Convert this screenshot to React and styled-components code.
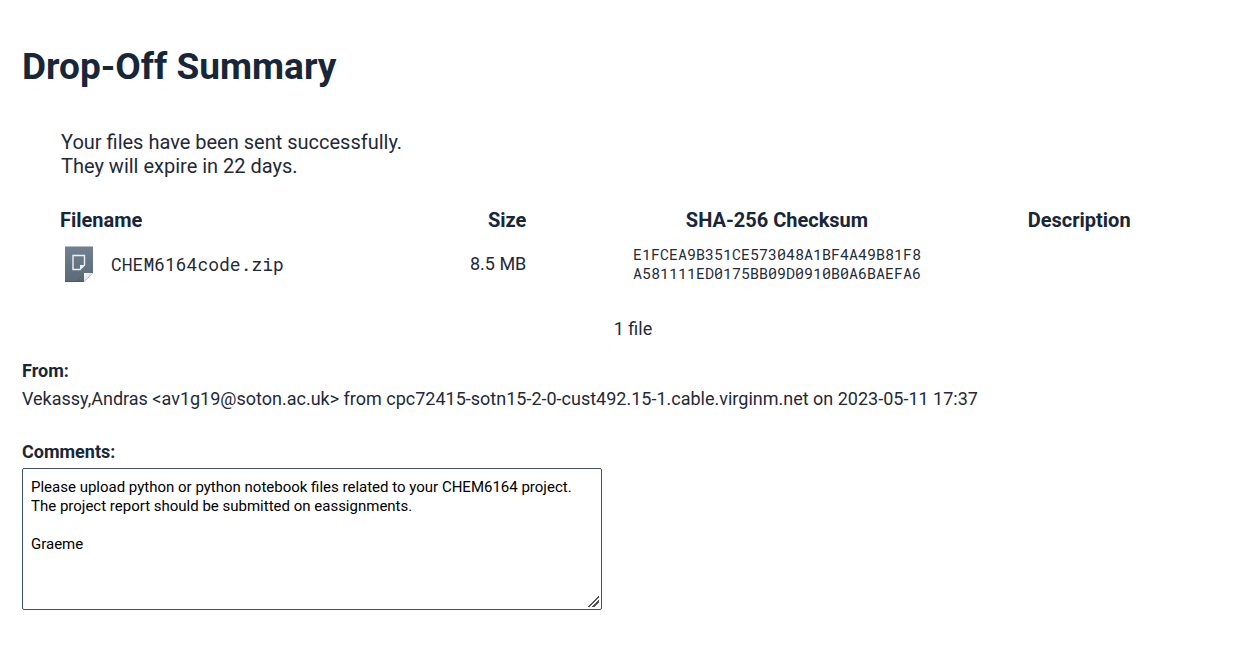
import React from "react";
import styled, { createGlobalStyle } from "styled-components";

const GlobalStyle = createGlobalStyle`
  * { box-sizing: border-box; }
  body {
    margin: 0;
    background: #fff;
    color: #1f2937;
    font-family: Roboto, "Liberation Sans", sans-serif;
    font-size: 18px;
    line-height: 24px;
  }
`;

const Page = styled.main`
  padding: 43px 22px 32px;
`;

const Title = styled.h1`
  margin: 0 0 39px;
  font-size: 37px;
  line-height: 48px;
  font-weight: 700;
  color: #172638;
`;

const Summary = styled.section`
  margin: 0 5px 0 35px;
`;

const Status = styled.p`
  margin: 0 0 28px 4px;
  font-size: 20px;
`;

const FileTable = styled.table`
  width: 100%;
  table-layout: fixed;
  border-collapse: collapse;
`;

const HeadCell = styled.th`
  width: ${(p) => p.$width};
  padding: 2px 3px;
  text-align: ${(p) => p.$align || "left"};
  font-size: 20px;
  font-weight: 700;
  color: #172638;
`;

const Cell = styled.td`
  height: 60px;
  padding: 2px 3px;
  text-align: ${(p) => p.$align || "left"};
  vertical-align: middle;
`;

const FileName = styled.div`
  display: flex;
  align-items: center;
  gap: 16px;
  padding-left: 3px;
  font-family: "Roboto Mono", "Liberation Mono", monospace;
`;

const Checksum = styled.div`
  font-family: "Roboto Mono", "Liberation Mono", monospace;
  font-size: 15px;
  line-height: 19px;
`;

const FileCount = styled.p`
  margin: 23px 0 18px;
  text-align: center;
`;

const Label = styled.label`
  display: block;
  font-weight: 700;
  color: #172638;
`;

const Heading = styled.h2`
  margin: 0 0 4px;
  font-size: 18px;
  line-height: 24px;
  font-weight: 700;
  color: #172638;
`;

const Sender = styled.p`
  margin: 0 0 29px;
`;

const Comments = styled.textarea`
  display: block;
  width: 580px;
  max-width: 100%;
  height: 142px;
  margin-top: 4px;
  padding: 9px 8px;
  border: 1px solid #40516b;
  border-radius: 2px;
  background: #fff;
  color: #000;
  font: 15px/19px Roboto, "Liberation Sans", sans-serif;
  resize: both;
  overflow: auto;

  &::-webkit-resizer {
    background: linear-gradient(
      135deg,
      transparent 0 46%,
      #555 46% 56%,
      transparent 56% 68%,
      #555 68% 78%,
      transparent 78%
    ) center / 11px 11px no-repeat;
  }
`;

function FileIcon() {
  return (
    <svg width="32" height="38" viewBox="0 0 32 38" aria-hidden="true">
      <defs>
        <linearGradient id="sheet" x1="0" y1="0" x2="0" y2="1">
          <stop offset="0" stopColor="#718190" />
          <stop offset="1" stopColor="#5b6978" />
        </linearGradient>
        <linearGradient id="fold" x1="0" y1="0" x2="1" y2="1">
          <stop offset="0" stopColor="#fff" />
          <stop offset="0.5" stopColor="#dedede" />
          <stop offset="1" stopColor="#fff" />
        </linearGradient>
      </defs>
      <path d="M2 1H30V28L21 37H2Z" fill="url(#sheet)" />
      <path d="M2 1H30V2H2Z" fill="#b3bcc5" />
      <path d="M2 36H21V37H2Z" fill="#465361" />
      <path d="M21 28L12 37H21Z" fill="#536170" opacity="0.5" />
      <path d="M21 28H30L21 37Z" fill="url(#fold)" />
      <path d="M10 10.5H21.5V20L17 24.5H10Z" fill="none" stroke="#eef1f3" strokeWidth="1.4" />
      <path d="M17 20H21.5L17 24.5Z" fill="#eef1f3" />
    </svg>
  );
}

const comment = `Please upload python or python notebook files related to your CHEM6164 project.
The project report should be submitted on eassignments.

Graeme`;

export default function App() {
  return (
    <>
      <GlobalStyle />
      <Page>
        <Title>Drop-Off Summary</Title>
        <Summary>
          <Status>
            Your files have been sent successfully.
            <br />
            They will expire in 22 days.
          </Status>
          <FileTable>
            <thead>
              <tr>
                <HeadCell $width="30%">Filename</HeadCell>
                <HeadCell $width="11%" $align="right">Size</HeadCell>
                <HeadCell $width="43%" $align="center">SHA-256 Checksum</HeadCell>
                <HeadCell $width="16%">Description</HeadCell>
              </tr>
            </thead>
            <tbody>
              <tr>
                <Cell>
                  <FileName>
                    <FileIcon />
                    CHEM6164code.zip
                  </FileName>
                </Cell>
                <Cell $align="right">8.5 MB</Cell>
                <Cell $align="center">
                  <Checksum>
                    E1FCEA9B351CE573048A1BF4A49B81F8
                    <br />
                    A581111ED0175BB09D0910B0A6BAEFA6
                  </Checksum>
                </Cell>
                <Cell />
              </tr>
            </tbody>
          </FileTable>
          <FileCount>1 file</FileCount>
        </Summary>
        <Heading>From:</Heading>
        <Sender>
          Vekassy,Andras &lt;av1g19@soton.ac.uk&gt; from cpc72415-sotn15-2-0-cust492.15-1.cable.virginm.net on 2023-05-11 17:37
        </Sender>
        <Label htmlFor="comments">Comments:</Label>
        <Comments id="comments" readOnly defaultValue={comment} />
      </Page>
    </>
  );
}
